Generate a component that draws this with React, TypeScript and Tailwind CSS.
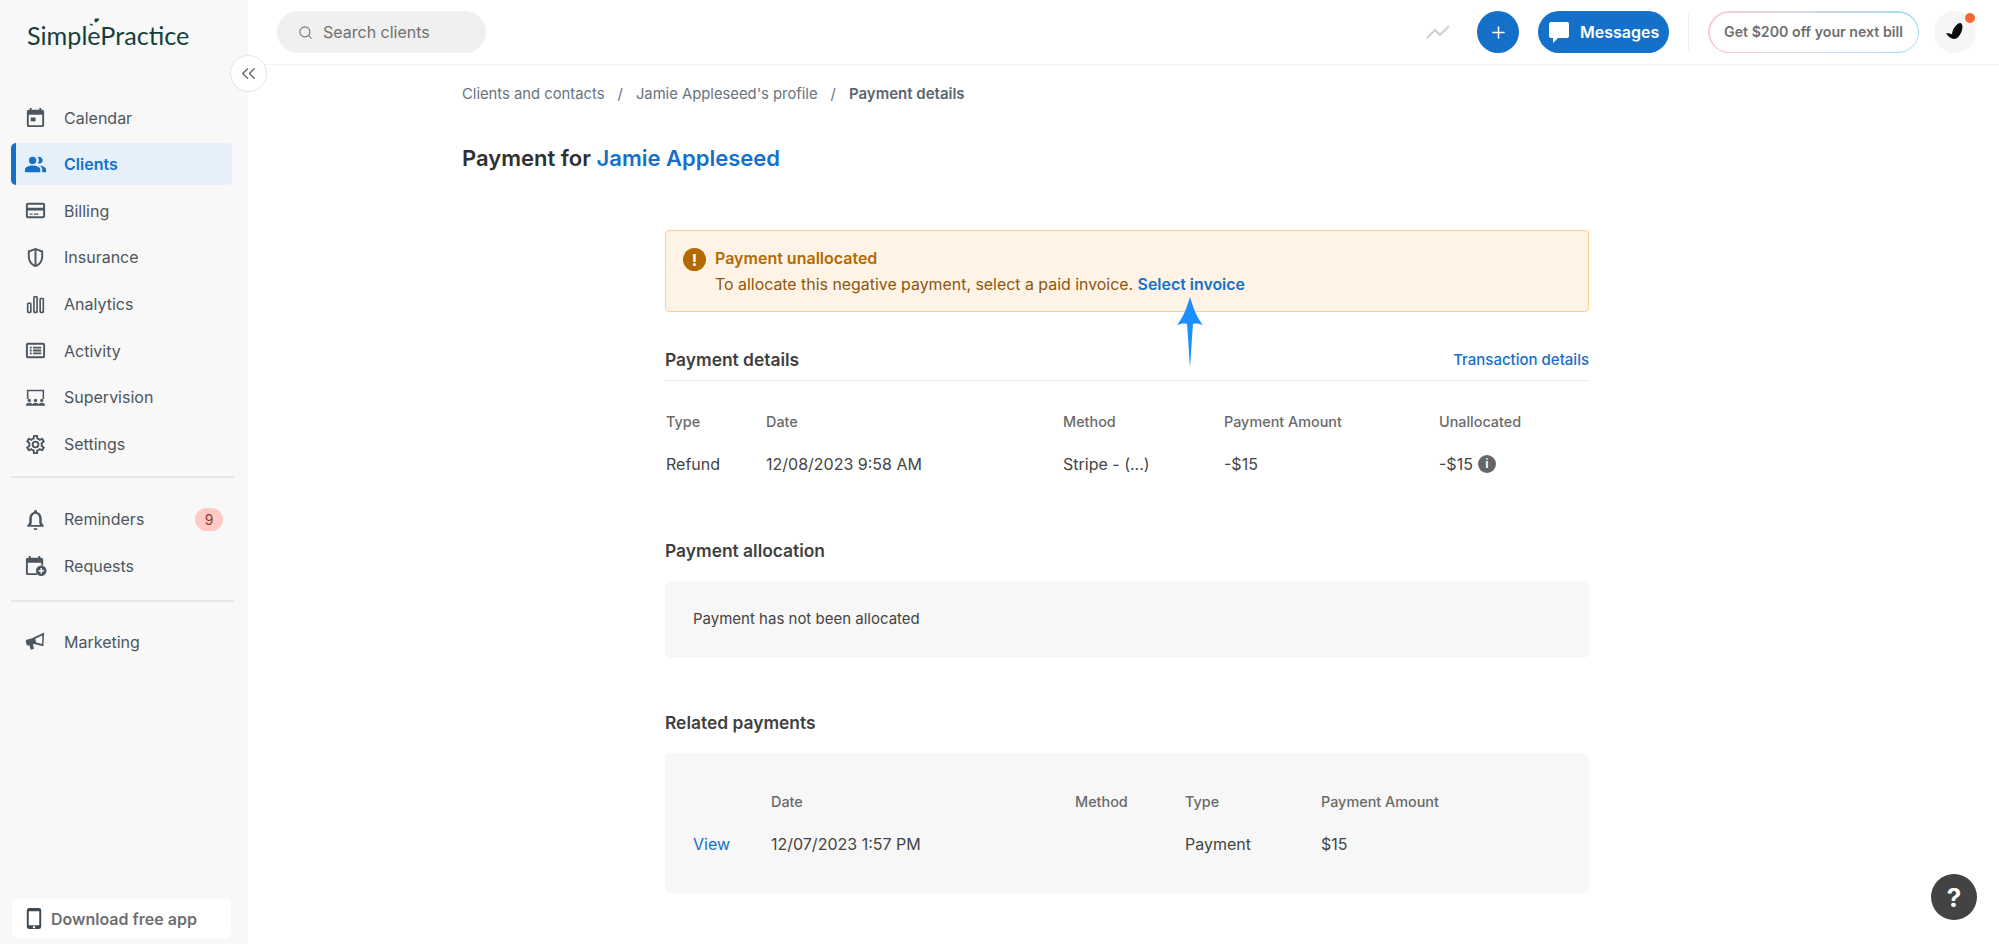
import type { ReactNode } from 'react';
import { Search, Plus, ChevronsLeft } from 'lucide-react';

const font = { fontFamily: 'Inter, "Liberation Sans", sans-serif' };

function Ico({ children, className = '' }: { children: ReactNode; className?: string }) {
  return (
    <svg viewBox="0 0 24 24" fill="currentColor" className={`w-[23px] h-[23px] shrink-0 ${className}`}>
      {children}
    </svg>
  );
}

const CalendarIcon = () => (
  <Ico>
    <path d="M19 4h-1V2h-2v2H8V2H6v2H5a2 2 0 0 0-2 2v14a2 2 0 0 0 2 2h14a2 2 0 0 0 2-2V6a2 2 0 0 0-2-2zm0 16H5V9h14v11z" />
    <path d="M7 12h5v4H7z" />
  </Ico>
);
const ClientsIcon = () => (
  <Ico>
    <path d="M16 11a3.5 3.5 0 1 0-1.6-6.6 5 5 0 0 1 0 6.2c.5.3 1 .4 1.6.4zM9 11.5a3.8 3.8 0 1 0 0-7.6 3.8 3.8 0 0 0 0 7.6zM9 13c-2.9 0-8 1.4-8 4.2V20h16v-2.8C17 14.4 11.9 13 9 13zm7.4.1c1.4 1 2.6 2.3 2.6 4.1V20h4v-2.8c0-2.5-4.2-3.9-6.6-4.1z" />
  </Ico>
);
const BillingIcon = () => (
  <Ico>
    <path d="M20 4H4a2 2 0 0 0-2 2v12a2 2 0 0 0 2 2h16a2 2 0 0 0 2-2V6a2 2 0 0 0-2-2zm0 14H4v-6h16v6zm0-9H4V6h16v3z" />
    <path d="M6 15h3v1.4H6zM10.5 15H15v1.4h-4.500z" />
  </Ico>
);
const ShieldIcon = () => (
  <Ico>
    <path d="M12 2 4 5v6c0 5.100 3.400 9.800 8 11 4.600-1.200 8-5.900 8-11V5l-8-3zm-1 17.500C8 18.200 6 14.800 6 11V6.400l5-1.900v15zm2 0v-15l5 1.900V11c0 3.800-2 7.200-5 8.500z" />
  </Ico>
);
const AnalyticsIcon = () => (
  <Ico>
    <path fillRule="evenodd" d="M4.500 10h2A1.500 1.500 0 0 1 8 11.500v8A1.500 1.500 0 0 1 6.500 21h-2A1.500 1.500 0 0 1 3 19.500v-8A1.500 1.500 0 0 1 4.500 10zm.2 1.600v7.800h1.600v-7.800zM11 3h2a1.500 1.500 0 0 1 1.500 1.500v15A1.500 1.500 0 0 1 13 21h-2a1.500 1.500 0 0 1-1.500-1.500v-15A1.500 1.500 0 0 1 11 3zm.2 1.600v14.800h1.600V4.600zM17.500 5h2A1.500 1.500 0 0 1 21 6.500v13a1.500 1.500 0 0 1-1.500 1.500h-2a1.500 1.500 0 0 1-1.500-1.500v-13A1.500 1.500 0 0 1 17.500 5zm.2 1.600v12.800h1.600V6.600z" />
  </Ico>
);
const ActivityIcon = () => (
  <Ico>
    <path d="M20 4H4a2 2 0 0 0-2 2v12a2 2 0 0 0 2 2h16a2 2 0 0 0 2-2V6a2 2 0 0 0-2-2zm0 14H4V6h16v12z" />
    <path d="M6 8h2v2H6zM6 11h2v2H6zM6 14h2v2H6zM9.500 8H18v2H9.500zM9.500 11H18v2H9.500zM9.500 14H18v2H9.500z" />
  </Ico>
);
const SupervisionIcon = () => (
  <Ico>
    <path d="M3 4h18v9.500h-1.600V5.600H4.600v7.900H3z" />
    <circle cx="5.500" cy="15" r="1.700" />
    <circle cx="12" cy="15" r="1.700" />
    <circle cx="18.500" cy="15" r="1.700" />
    <path d="M2 20.500c0-2 1.500-3 3.500-3s3.500 1 3.500 3zM8.500 20.500c0-2 1.500-3 3.500-3s3.500 1 3.500 3zM15 20.500c0-2 1.500-3 3.500-3s3.500 1 3.500 3z" />
  </Ico>
);
const SettingsIcon = () => (
  <Ico>
    <path d="M19.430 12.980c.04-.32.070-.64.070-.98s-.03-.66-.07-.98l2.110-1.650a.5.5 0 0 0 .12-.64l-2-3.460a.5.5 0 0 0-.61-.22l-2.490 1a7.300 7.300 0 0 0-1.690-.98l-.38-2.650A.49.49 0 0 0 14 2h-4a.49.49 0 0 0-.49.420l-.38 2.650c-.61.25-1.170.59-1.690.98l-2.490-1a.57.57 0 0 0-.18-.03.5.5 0 0 0-.43.250l-2 3.460a.49.49 0 0 0 .12.640l2.110 1.650c-.04.32-.07.650-.07.980s.03.660.07.980l-2.110 1.650a.5.5 0 0 0-.12.640l2 3.460a.5.5 0 0 0 .61.220l2.490-1c.52.4 1.080.73 1.690.98l.38 2.650c.03.24.24.420.49.420h4c.25 0 .46-.18.49-.42l.38-2.650c.61-.25 1.170-.59 1.690-.98l2.490 1a.57.57 0 0 0 .18.030.5.5 0 0 0 .43-.25l2-3.460a.5.5 0 0 0-.12-.64l-2.110-1.650zm-1.980-1.710c.04.31.050.52.050.730s-.02.43-.05.730l-.14 1.130.89.700 1.080.840-.7 1.210-1.270-.51-1.040-.42-.9.680c-.43.320-.84.560-1.250.730l-1.060.43-.16 1.130-.2 1.350h-1.400l-.19-1.350-.16-1.130-1.060-.43a5.500 5.500 0 0 1-1.230-.71l-.91-.7-1.060.430-1.270.510-.7-1.210 1.080-.84.890-.7-.14-1.130A8 8 0 0 1 6.500 12c0-.2.020-.43.050-.73l.14-1.130-.89-.7-1.080-.84.7-1.210 1.270.510 1.040.42.9-.68c.43-.32.840-.56 1.250-.73l1.060-.43.16-1.130.2-1.350h1.390l.19 1.350.16 1.130 1.060.43c.43.180.83.410 1.230.71l.91.700 1.060-.43 1.270-.51.7 1.210-1.070.85-.89.7.14 1.130zM12 8a4 4 0 1 0 0 8 4 4 0 0 0 0-8zm0 6a2 2 0 1 1 0-4 2 2 0 0 1 0 4z" />
  </Ico>
);
const BellIcon = () => (
  <Ico>
    <path d="M12 23a2 2 0 0 0 2-2h-4a2 2 0 0 0 2 2zm8.500-5-2-2.500V11c0-3.500-2-6.200-5-6.800V3.500a1.500 1.500 0 0 0-3 0v.7c-3 .6-5 3.300-5 6.800v4.500l-2 2.500v1.500h17V18zm-3.600-.2H7.100l1-1.500V11c0-2.800 1.700-5 3.900-5s3.900 2.200 3.900 5v5.300z" />
  </Ico>
);
const RequestsIcon = () => (
  <Ico>
    <path d="M18 4h-1V2h-2v2H7V2H5v2H4a2 2 0 0 0-2 2v14a2 2 0 0 0 2 2h9.500v-2H4V9h14v3h2V6a2 2 0 0 0-2-2z" />
    <circle cx="18" cy="17.500" r="5.500" />
    <path fill="#f8f8f8" d="M17.200 14.700h1.600v2h2v1.600h-2v2h-1.600v-2h-2v-1.600h2z" />
  </Ico>
);
const MarketingIcon = () => (
  <Ico>
    <path fillRule="evenodd" d="M21 2.500 8.500 8.500 3 10.200c-1 .3-1.400 1-1.100 2l.8 2.800c.3 1 1 1.400 2 1.100l1-.3 1.300 4.700 3.500-1-1.300-4.500 1.200-.3 9.800 2.300L21 2.500zm-1.900 3.300-.2 8.800-6.200-1.500-1-3.900 7.400-3.400z" />
  </Ico>
);

const nav = [
  { label: 'Calendar', icon: <CalendarIcon /> },
  { label: 'Clients', icon: <ClientsIcon />, active: true },
  { label: 'Billing', icon: <BillingIcon /> },
  { label: 'Insurance', icon: <ShieldIcon /> },
  { label: 'Analytics', icon: <AnalyticsIcon /> },
  { label: 'Activity', icon: <ActivityIcon /> },
  { label: 'Supervision', icon: <SupervisionIcon /> },
  { label: 'Settings', icon: <SettingsIcon /> },
];

function NavRow({ label, icon, active, badge }: { label: string; icon: ReactNode; active?: boolean; badge?: string }) {
  return (
    <div
      className={`h-[42px] mb-[4.67px] flex items-center pr-[9px] gap-[17px] rounded-[5px] text-[16px] ${
        active
          ? 'bg-[#e6f0fa] border-l-[5px] border-[#1470c8] pl-[8px] text-[#1470c8] font-semibold'
          : 'pl-[13px] text-[#4c5660]'
      }`}
    >
      {icon}
      <span className="flex-1">{label}</span>
      {badge && (
        <span className="w-[28px] h-[23px] rounded-full bg-[#fdcbc4] text-[#8f3a2e] text-[14px] flex items-center justify-center">
          {badge}
        </span>
      )}
    </div>
  );
}

function Sidebar() {
  return (
    <aside className="w-[248px] shrink-0 h-[944px] bg-[#f8f8f8] flex flex-col">
      <div className="h-[96.500px] pl-[27px] pt-[16px]">
        <div
          className="relative inline-block text-[25.200px] leading-[38px] text-[#163f3c]"
          style={{ fontFamily: 'Lato, sans-serif' }}
        >
          SimplePractice
          <svg viewBox="0 0 14 14" className="absolute left-[61px] top-[2px] w-[12px] h-[12px]" fill="#163f3c">
            <path d="M8 1c2-.8 4-.5 5 0-.2 2-1.600 4-4.500 4C7.500 5 7.300 2.500 8 1zM2 7c1.500-.5 3 0 4 1.500-1.500.6-3 .5-4-1.500z" />
          </svg>
        </div>
      </div>
      <nav className="pl-[11px] pr-[16px]">
        {nav.map((n) => (
          <NavRow key={n.label} {...n} />
        ))}
        <div className="h-[2px] w-[223px] bg-[#e6e6e6] mt-[11px] mb-[20px]" />
        <NavRow label="Reminders" icon={<BellIcon />} badge="9" />
        <NavRow label="Requests" icon={<RequestsIcon />} />
        <div className="h-[2px] w-[223px] bg-[#e6e6e6] mt-[13px] mb-[19px]" />
        <NavRow label="Marketing" icon={<MarketingIcon />} />
      </nav>
      <div className="mt-auto mb-[6px] ml-[12px] w-[219px] h-[39px] bg-white rounded-[5px] flex items-center pl-[14px] gap-[9px] text-[#6f6f6f] text-[16px] font-semibold">
        <svg viewBox="0 0 16 24" className="w-[16px] h-[23px] shrink-0" fill="#3e4952">
          <path fillRule="evenodd" d="M3 1h10a2.500 2.500 0 0 1 2.500 2.500v17A2.500 2.500 0 0 1 13 23H3a2.500 2.500 0 0 1-2.500-2.500v-17A2.500 2.500 0 0 1 3 1zm-.5 3.500v14.500h11V4.500zM8 19.700a1.300 1.300 0 1 0 0 2.600 1.300 1.300 0 0 0 0-2.600z" />
        </svg>
        Download free app
      </div>
    </aside>
  );
}

function TopBar() {
  return (
    <header className="h-[65px] shrink-0 border-b border-[#f0f0f0] flex items-center pl-[29px] pr-[23px]">
      <div className="w-[209px] h-[42px] rounded-full bg-[#f0f0f0] flex items-center pl-[21px] gap-[10px] text-[#6f6f6f] text-[16px]">
        <Search size={15} strokeWidth={1.800} className="text-[#777]" />
        Search clients
      </div>
      <svg viewBox="0 0 24 16" className="ml-auto w-[24px] h-[16px]" fill="none" stroke="#cfcfcf" strokeWidth="2">
        <path d="M1 14 9 6l5 5L23 2" />
      </svg>
      <button className="ml-[27px] w-[42px] h-[42px] rounded-full bg-[#1470c8] text-white flex items-center justify-center">
        <Plus size={19} strokeWidth={2} />
      </button>
      <button className="ml-[19px] w-[131px] h-[42px] rounded-full bg-[#1470c8] text-white text-[16px] font-semibold flex items-center pl-[9px] gap-[9px]">
        <svg viewBox="0 0 24 24" className="w-[24px] h-[24px] shrink-0" fill="#fff">
          <path d="M4 2h16a2 2 0 0 1 2 2v12a2 2 0 0 1-2 2H11l-5 5v-5H4a2 2 0 0 1-2-2V4a2 2 0 0 1 2-2z" />
        </svg>
        Messages
      </button>
      <div className="ml-[19px] w-px h-[37px] bg-[#eeeeee]" />
      <div className="ml-[19px] w-[211px] h-[42px] rounded-full p-[1.5px] bg-gradient-to-r from-[#fbcdd3] to-[#9fdff5]">
        <div className="w-full h-full rounded-full bg-white flex items-center justify-center text-[14.200px] font-semibold text-[#6f6f6f]">
          Get $200 off your next bill
        </div>
      </div>
      <div className="relative ml-[15px] w-[42px] h-[42px] rounded-full bg-[#f6f6f6] flex items-center justify-center">
        <svg viewBox="0 0 18 18" className="w-[18px] h-[18px] -ml-[3px] -mt-[2px]" fill="#0c0c0c">
          <path d="M15.500 1c2 .7 2.500 4 1.500 7-1 4-4 9-8 9-3 0-6-2.500-8-6 3 0 5 1 6 1.200C7 9 9 5.500 11 3.500 12 2.300 14 .7 15.500 1z" />
        </svg>
        <span className="absolute right-[1px] top-[2px] w-[10px] h-[10px] rounded-full bg-[#fb6530]" />
      </div>
    </header>
  );
}

function Section({ title, action }: { title: string; action?: string }) {
  return (
    <div className="flex justify-between items-center text-[17.400px] leading-[24px] font-semibold text-[#3f3f3f]">
      <span>{title}</span>
      {action && <span className="text-[15px] font-medium text-[#1470c8]">{action}</span>}
    </div>
  );
}

function Content() {
  return (
    <main className="flex-1 pl-[214px] relative">
      <div className="h-[58px] pt-[19px] text-[14.800px] leading-[20px] text-[#67737e]">
        Clients and contacts<span className="mx-[13px]">/</span>Jamie Appleseed's profile
        <span className="mx-[13px]">/</span>
        <span className="font-semibold text-[#5a6670] text-[15px]">Payment details</span>
      </div>
      <h1 className="text-[22px] leading-[30px] font-semibold text-[#303030] mt-[20px]">
        Payment for <span className="text-[#1470c8]">Jamie Appleseed</span>
      </h1>

      <div className="ml-[203px] w-[924px] mt-[57px]">
        <div className="relative h-[82px] rounded-[4px] border border-[#fdcf92] bg-[#fff3e6] flex pl-[17px] pt-[17px]">
          <span className="w-[23px] h-[23px] rounded-full bg-[#b36a00] text-white text-[16px] font-bold flex items-center justify-center">
            !
          </span>
          <div className="ml-[9px] -mt-[2px]">
            <div className="text-[16px] leading-[24px] font-semibold text-[#b36a00]">Payment unallocated</div>
            <div className="text-[15.900px] leading-[24px] mt-[3px] text-[#8c5710]">
              To allocate this negative payment, select a paid invoice.{' '}
              <span className="font-semibold text-[#1470c8]">Select invoice</span>
            </div>
          </div>
          {/* annotation arrow */}
          <svg viewBox="0 0 30 72" className="absolute left-[509px] top-[65px] w-[30px] h-[74px]" fill="#1b8fff">
            <path d="M15 0c3 10 7 21 13 28-3-1-7-2-10-1-1 12-2 30-3 44-1-14-2-32-3-44-3-1-7 0-10 1C8 21 12 10 15 0z" />
          </svg>
        </div>

        <div className="mt-[36px] h-[33px] border-b border-[#ececec]">
          <Section title="Payment details" action="Transaction details" />
        </div>

        <div className="grid grid-cols-[100px_297px_161px_215px_1fr] pl-[1px] mt-[31px] text-[14.400px] font-medium text-[#6a6a6a] leading-[20px]">
          <span>Type</span>
          <span>Date</span>
          <span>Method</span>
          <span>Payment Amount</span>
          <span>Unallocated</span>
        </div>
        <div className="grid grid-cols-[100px_297px_161px_215px_1fr] pl-[1px] mt-[20px] text-[16px] text-[#444] leading-[24px]">
          <span>Refund</span>
          <span>12/08/2023 9:58 AM</span>
          <span>Stripe - (...)</span>
          <span>-$15</span>
          <span className="flex items-center gap-[5px]">
            -$15
            <span className="w-[18px] h-[18px] rounded-full bg-[#666] text-white text-[12px] font-bold flex items-center justify-center">
              i
            </span>
          </span>
        </div>

        <div className="mt-[63px]">
          <Section title="Payment allocation" />
        </div>
        <div className="mt-[18px] h-[77px] rounded-[6px] bg-[#f7f7f7] flex items-center pl-[28px] text-[15px] text-[#444]">
          Payment has not been allocated
        </div>

        <div className="mt-[53px]">
          <Section title="Related payments" />
        </div>
        <div className="mt-[18px] h-[140px] rounded-[6px] bg-[#f7f7f7] pt-[39px]">
          <div className="grid grid-cols-[78px_304px_110px_136px_1fr] pl-[28px] text-[14.400px] font-medium text-[#6a6a6a] leading-[20px]">
            <span />
            <span>Date</span>
            <span>Method</span>
            <span>Type</span>
            <span>Payment Amount</span>
          </div>
          <div className="grid grid-cols-[78px_304px_110px_136px_1fr] pl-[28px] mt-[20px] text-[16px] text-[#444] leading-[24px]">
            <span className="text-[#1470c8]">View</span>
            <span>12/07/2023 1:57 PM</span>
            <span />
            <span>Payment</span>
            <span>$15</span>
          </div>
        </div>
      </div>
    </main>
  );
}

export default function App() {
  return (
    <div className="relative w-[1999px] h-[944px] overflow-hidden bg-white flex" style={font}>
      <Sidebar />
      <div className="flex-1 flex flex-col min-w-0">
        <TopBar />
        <Content />
      </div>
      <button className="absolute left-[229.500px] top-[54.500px] w-[37px] h-[37px] rounded-full bg-white border border-[#e4e4e4] flex items-center justify-center text-[#6a6a6a]">
        <ChevronsLeft size={23} strokeWidth={1.500} />
      </button>
      <button className="absolute left-[1931px] top-[874px] w-[46px] h-[46px] rounded-full bg-[#434343] text-white text-[26px] font-bold flex items-center justify-center">
        ?
      </button>
    </div>
  );
}
